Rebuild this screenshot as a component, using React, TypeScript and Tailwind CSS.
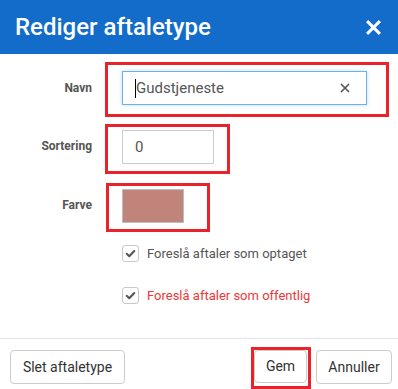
import React from 'react';

const Check = () => (
  <svg width="11" height="11" viewBox="0 0 16 16" fill="none">
    <path d="M2.5 8.5 L6.2 12 L13.5 4.5" stroke="#555" strokeWidth="3" strokeLinecap="round" strokeLinejoin="round" />
  </svg>
);

const CheckRow = ({ label, red }: { label: string; red?: boolean }) => (
  <div className="flex items-center pl-[122px] h-[17px]">
    <span className="w-[17px] h-[17px] rounded-[3px] border border-[#c8c8c8] bg-white flex items-center justify-center">
      <Check />
    </span>
    <span className={`ml-[8px] text-[13px] ${red ? 'text-[#ec3838]' : 'text-[#555]'}`}>{label}</span>
  </div>
);

export default function App() {
  return (
    <div className="w-[398px] h-[389px] bg-white flex flex-col overflow-hidden font-['Roboto',sans-serif]">
      <div className="h-[54px] shrink-0 bg-[#136cc9] flex items-center justify-between pl-[15px] pr-[17px]">
        <h1 className="text-white text-[24px] font-medium leading-none">Rediger aftaletype</h1>
        <svg width="15" height="15" viewBox="0 0 14 14">
          <path d="M2 2 L12 12 M12 2 L2 12" stroke="white" strokeWidth="2.8" strokeLinecap="square" />
        </svg>
      </div>

      <div className="flex-1 pt-[8px]">
        {/* Navn */}
        <div className="flex items-center">
          <label className="w-[92px] pb-[4px] text-right text-[12px] font-bold text-[#555]">Navn</label>
          <div className="ml-[13px] w-[284px] h-[55px] border-[3px] border-[#e8232b] pl-[14px] pt-[6px]">
            <div className="w-[245px] h-[34px] border border-[#6cb0ec] shadow-[0_0_4px_rgba(102,175,233,0.45)] flex items-center pl-[12px] pr-[16px]">
              <span className="w-px h-[19px] bg-black" />
              <span className="flex-1 text-[15px] text-[#555]">Gudstjeneste</span>
              <svg width="10" height="10" viewBox="0 0 10 10">
                <path d="M1 1 L9 9 M9 1 L1 9" stroke="#555" strokeWidth="1.6" />
              </svg>
            </div>
          </div>
        </div>

        {/* Sortering */}
        <div className="flex items-center mt-[7px]">
          <label className="w-[92px] pb-[6px] text-right text-[12px] font-bold text-[#555]">Sortering</label>
          <div className="ml-[13px] w-[125px] h-[50px] border-[3px] border-[#e8232b] pl-[14px] pt-[3px]">
            <div className="w-[92px] h-[34px] border border-[#ccc] flex items-center pl-[12px] text-[15px] text-[#555]">0</div>
          </div>
        </div>

        {/* Farve */}
        <div className="flex items-center mt-[9px]">
          <label className="w-[92px] pb-[5px] text-right text-[12px] font-bold text-[#555]">Farve</label>
          <div className="ml-[14px] w-[104px] h-[49px] border-[3px] border-[#e8232b] pl-[13px] pt-[3px]">
            <div className="w-[62px] h-[34px] bg-[#c1847a] border border-[#bdbdbd]" />
          </div>
        </div>

        <div className="mt-[13px] flex flex-col gap-[25px]">
          <CheckRow label="Foreslå aftaler som optaget" />
          <CheckRow label="Foreslå aftaler som offentlig" red />
        </div>
      </div>

      <div className="h-[51px] shrink-0 border-t border-[#e3e3e3] flex items-start justify-between pl-[10px] pr-[6px] pt-[11px]">
        <button className="w-[115px] h-[34px] rounded-[4px] border border-[#ccc] text-[14px] text-[#333]">Slet aftaletype</button>
        <div className="flex items-start">
          <div className="-mt-[3px] w-[60px] h-[42px] border-[3px] border-[#e8232b] pr-[1px]">
            <button className="w-full h-[33px] rounded-[4px] border border-[#ccc] text-[14px] text-[#333]">Gem</button>
          </div>
          <button className="ml-[5px] w-[76px] h-[34px] rounded-[4px] border border-[#ccc] text-[14px] text-[#333]">Annuller</button>
        </div>
      </div>
    </div>
  );
}
